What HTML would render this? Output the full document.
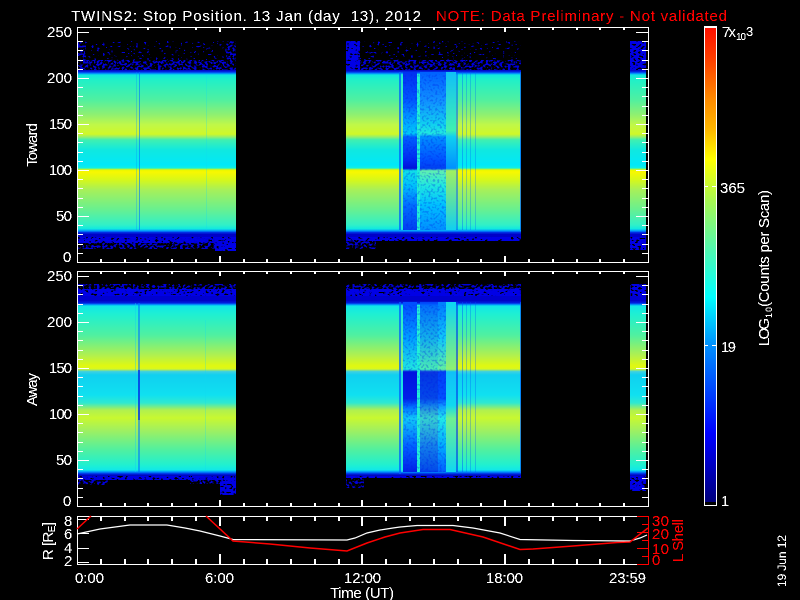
<!DOCTYPE html>
<html><head><meta charset="utf-8"><title>TWINS2 Stop Position</title>
<style>
html,body{margin:0;padding:0;background:#000;width:800px;height:600px;overflow:hidden}
svg{display:block}
text{font-family:"Liberation Sans",sans-serif;fill:#fff;font-size:15px}
.r{fill:#f00}
</style></head><body>
<svg width="800" height="600" viewBox="0 0 800 600" xmlns="http://www.w3.org/2000/svg">
<defs>
<linearGradient id="g1" gradientUnits="userSpaceOnUse" x1="0" x2="0" y1="70" y2="236">
<stop offset="0" stop-color="#0000c0"/><stop offset=".012" stop-color="#0030e8"/><stop offset=".021" stop-color="#0090ff"/><stop offset=".03" stop-color="#10e8e0"/><stop offset=".06" stop-color="#20f0c8"/><stop offset=".18" stop-color="#50f0a0"/><stop offset=".27" stop-color="#90f070"/><stop offset=".33" stop-color="#c0f848"/><stop offset=".386" stop-color="#d0f828"/><stop offset=".404" stop-color="#90f070"/><stop offset=".42" stop-color="#40f0b0"/><stop offset=".482" stop-color="#10e8e0"/><stop offset=".572" stop-color="#00e8f8"/><stop offset=".59" stop-color="#10f0e0"/><stop offset=".602" stop-color="#e8f800"/><stop offset=".614" stop-color="#f8f800"/><stop offset=".66" stop-color="#d8f818"/><stop offset=".72" stop-color="#a8f058"/><stop offset=".84" stop-color="#68f090"/><stop offset=".934" stop-color="#30f0c8"/><stop offset=".957" stop-color="#10e8e0"/><stop offset=".97" stop-color="#0090ff"/><stop offset=".98" stop-color="#0020e0"/><stop offset="1" stop-color="#0000b0"/>
</linearGradient>
<linearGradient id="g2" gradientUnits="userSpaceOnUse" x1="0" x2="0" y1="300" y2="476">
<stop offset="0" stop-color="#0000c0"/><stop offset=".017" stop-color="#0020e0"/><stop offset=".026" stop-color="#0090ff"/><stop offset=".034" stop-color="#10e8e8"/><stop offset=".085" stop-color="#20f0d0"/><stop offset=".2" stop-color="#50f0a0"/><stop offset=".313" stop-color="#b0f050"/><stop offset=".375" stop-color="#e0f810"/><stop offset=".392" stop-color="#d8f820"/><stop offset=".406" stop-color="#40d0e0"/><stop offset=".426" stop-color="#10d0f0"/><stop offset=".54" stop-color="#10e0f0"/><stop offset=".585" stop-color="#30e8d0"/><stop offset=".625" stop-color="#b0f050"/><stop offset=".67" stop-color="#c8f830"/><stop offset=".74" stop-color="#a0f060"/><stop offset=".852" stop-color="#50f0a0"/><stop offset=".937" stop-color="#20f0d0"/><stop offset=".966" stop-color="#10e8e8"/><stop offset=".977" stop-color="#0090ff"/><stop offset=".989" stop-color="#0020e0"/><stop offset="1" stop-color="#0000b0"/>
</linearGradient>
<!-- panel 1 disturbance columns: y = 72 + offset*158 -->
<linearGradient id="a1" gradientUnits="userSpaceOnUse" x1="0" x2="0" y1="72" y2="230">
<stop offset="0" stop-color="#0030f0"/><stop offset=".18" stop-color="#0058ff"/><stop offset=".3" stop-color="#00a0ff"/><stop offset=".39" stop-color="#00c8f8"/><stop offset=".41" stop-color="#0060ff"/><stop offset=".56" stop-color="#0028f0"/><stop offset=".61" stop-color="#0010d8"/><stop offset=".625" stop-color="#10e0e8"/><stop offset=".72" stop-color="#00c0fa"/><stop offset=".84" stop-color="#0070ff"/><stop offset="1" stop-color="#0040f0"/>
</linearGradient>
<linearGradient id="b1" gradientUnits="userSpaceOnUse" x1="0" x2="0" y1="72" y2="230">
<stop offset="0" stop-color="#0060ff"/><stop offset=".18" stop-color="#1090ff"/><stop offset=".33" stop-color="#10d0f0"/><stop offset=".39" stop-color="#20e8e0"/><stop offset=".41" stop-color="#0090ff"/><stop offset=".56" stop-color="#0050ff"/><stop offset=".61" stop-color="#0040f0"/><stop offset=".625" stop-color="#60f0b0"/><stop offset=".72" stop-color="#20e8e0"/><stop offset=".84" stop-color="#00c0ff"/><stop offset="1" stop-color="#0090ff"/>
</linearGradient>
<linearGradient id="c1" gradientUnits="userSpaceOnUse" x1="0" x2="0" y1="72" y2="230">
<stop offset="0" stop-color="#10c0f8"/><stop offset=".37" stop-color="#40f0b0"/><stop offset=".41" stop-color="#10d0f0"/><stop offset=".61" stop-color="#0090ff"/><stop offset=".625" stop-color="#a0f060"/><stop offset="1" stop-color="#10d0f0"/>
</linearGradient>
<!-- panel 2: y = 305 + offset*167 -->
<linearGradient id="a2" gradientUnits="userSpaceOnUse" x1="0" x2="0" y1="305" y2="472">
<stop offset="0" stop-color="#0050ff"/><stop offset=".2" stop-color="#00a0ff"/><stop offset=".385" stop-color="#20e8e0"/><stop offset=".4" stop-color="#0010e0"/><stop offset=".56" stop-color="#0020e8"/><stop offset=".61" stop-color="#0070ff"/><stop offset=".68" stop-color="#10c8f8"/><stop offset=".85" stop-color="#0060ff"/><stop offset="1" stop-color="#0020e8"/>
</linearGradient>
<linearGradient id="b2" gradientUnits="userSpaceOnUse" x1="0" x2="0" y1="305" y2="472">
<stop offset="0" stop-color="#0080ff"/><stop offset=".2" stop-color="#10c8f8"/><stop offset=".385" stop-color="#60f0a0"/><stop offset=".4" stop-color="#0040f8"/><stop offset=".56" stop-color="#0050ff"/><stop offset=".61" stop-color="#10a0ff"/><stop offset=".68" stop-color="#20e8e8"/><stop offset=".85" stop-color="#00a8ff"/><stop offset="1" stop-color="#0060ff"/>
</linearGradient>
<linearGradient id="c2" gradientUnits="userSpaceOnUse" x1="0" x2="0" y1="305" y2="472">
<stop offset="0" stop-color="#10d8f0"/><stop offset=".385" stop-color="#90f070"/><stop offset=".4" stop-color="#10c0f8"/><stop offset=".6" stop-color="#10d8f0"/><stop offset=".68" stop-color="#70f090"/><stop offset="1" stop-color="#10d8f0"/>
</linearGradient>
<linearGradient id="cb" gradientUnits="userSpaceOnUse" x1="0" x2="0" y1="28" y2="502">
<stop offset="0" stop-color="#ff1000"/><stop offset=".0675" stop-color="#ff4000"/><stop offset=".152" stop-color="#ff8c00"/><stop offset=".215" stop-color="#ffb800"/><stop offset=".278" stop-color="#ffff00"/><stop offset=".363" stop-color="#a8f850"/><stop offset=".468" stop-color="#50f8b0"/><stop offset=".568" stop-color="#00ffff"/><stop offset=".669" stop-color="#0090ff"/><stop offset=".855" stop-color="#0000ff"/><stop offset="1" stop-color="#00007c"/>
</linearGradient>
<filter id="aa" x="-5%" y="-20%" width="110%" height="140%" color-interpolation-filters="sRGB">
<feComponentTransfer><feFuncA type="discrete" tableValues="0 0 1 1 1"/></feComponentTransfer>
</filter>
<filter id="sp" x="0" y="0" width="1" height="1" color-interpolation-filters="sRGB">
<feTurbulence type="fractalNoise" baseFrequency=".36 .5" numOctaves="1" seed="4"/>
<feColorMatrix type="matrix" values="0 0 0 0 0  0 0 0 0 0  0 0 0 0 .85  30 0 0 0 -19.5"/>
</filter>
<filter id="sm" x="0" y="0" width="1" height="1" color-interpolation-filters="sRGB">
<feTurbulence type="fractalNoise" baseFrequency=".36 .5" numOctaves="1" seed="9"/>
<feColorMatrix type="matrix" values="0 0 0 0 0  0 0 0 0 0  0 0 0 0 .85  30 0 0 0 -15.5"/>
</filter>
<filter id="sd" x="0" y="0" width="1" height="1" color-interpolation-filters="sRGB">
<feTurbulence type="fractalNoise" baseFrequency=".36 .5" numOctaves="1" seed="15"/>
<feColorMatrix type="matrix" values="0 0 0 0 0  0 0 0 0 0  0 0 0 0 .9  30 0 0 0 -11.5"/>
</filter>
<filter id="gr" x="0" y="0" width="1" height="1" color-interpolation-filters="sRGB">
<feTurbulence type="fractalNoise" baseFrequency=".45" numOctaves="1" seed="21"/>
<feColorMatrix type="matrix" values="0 0 0 0 0  0 0 0 0 .1  0 0 0 0 .9  6 0 0 0 -3"/>
</filter>
<g id="yt" fill="none" stroke="#fff" stroke-width="1" shape-rendering="crispEdges">
<path d="M77 32.5h12M77 78.5h12M77 124.5h12M77 170.5h12M77 216.5h12M648 32.5h-12M648 78.5h-12M648 124.5h-12M648 170.5h-12M648 216.5h-12"/>
<path d="M77 253.5h6M77 244.5h6M77 234.5h6M77 225.5h6M77 207.5h6M77 198.5h6M77 188.5h6M77 179.5h6M77 161.5h6M77 152.5h6M77 142.5h6M77 133.5h6M77 115.5h6M77 106.5h6M77 96.5h6M77 87.5h6M77 69.5h6M77 60.5h6M77 50.5h6M77 41.5h6"/>
<path d="M648 253.5h-6M648 244.5h-6M648 234.5h-6M648 225.5h-6M648 207.5h-6M648 198.5h-6M648 188.5h-6M648 179.5h-6M648 161.5h-6M648 152.5h-6M648 142.5h-6M648 133.5h-6M648 115.5h-6M648 106.5h-6M648 96.5h-6M648 87.5h-6M648 69.5h-6M648 60.5h-6M648 50.5h-6M648 41.5h-6"/>
<path stroke-width="2" d="M220 262v-6M362 262v-6M505 262v-6M220 27v5M362 27v5M505 27v5"/>
<path stroke-width="2" d="M101 262v-3M125 262v-3M148 262v-3M172 262v-3M196 262v-3M244 262v-3M267 262v-3M291 262v-3M315 262v-3M339 262v-3M386 262v-3M410 262v-3M434 262v-3M458 262v-3M481 262v-3M529 262v-3M553 262v-3M577 262v-3M600 262v-3M624 262v-3"/>
<path stroke-width="2" d="M101 27v3M125 27v3M148 27v3M172 27v3M196 27v3M244 27v3M267 27v3M291 27v3M315 27v3M339 27v3M386 27v3M410 27v3M434 27v3M458 27v3M481 27v3M529 27v3M553 27v3M577 27v3M600 27v3M624 27v3"/>
<rect x="77.500" y="27.500" width="571" height="235"/>
</g>
</defs>
<rect width="800" height="600" fill="#000"/>

<!-- Panel 1 data -->
<g shape-rendering="crispEdges">
<rect x="78" y="41" width="158" height="24" filter="url(#sp)"/>
<rect x="78" y="60" width="158" height="11" filter="url(#sm)"/>
<rect x="78" y="41" width="8" height="30" filter="url(#sm)"/>
<rect x="226" y="41" width="10" height="30" filter="url(#sm)"/>
<rect x="346" y="41" width="175" height="24" filter="url(#sp)"/>
<rect x="346" y="60" width="175" height="11" filter="url(#sm)"/>
<rect x="346" y="41" width="14" height="30" filter="url(#sd)"/>
<rect x="630" y="41" width="16" height="30" filter="url(#sd)"/>
<rect x="78" y="235" width="158" height="8" filter="url(#sd)"/>
<rect x="78" y="238" width="158" height="11" filter="url(#sm)"/>
<rect x="215" y="238" width="21" height="13" filter="url(#sd)"/>
<rect x="346" y="235" width="175" height="6" filter="url(#sd)"/>
<rect x="346" y="238" width="30" height="11" filter="url(#sm)"/>
<rect x="630" y="234" width="16" height="16" filter="url(#sd)"/>
<rect x="78" y="70" width="158" height="166" fill="url(#g1)"/>
<rect x="346" y="70" width="175" height="166" fill="url(#g1)"/>
<rect x="630" y="70" width="16" height="166" fill="url(#g1)"/>
<rect x="78" y="234" width="158" height="3" fill="#0000c8"/>
<rect x="346" y="234" width="175" height="3" fill="#0000c8"/>
<rect x="630" y="234" width="16" height="3" fill="#0000c8"/>
<rect x="136" y="72" width="1" height="158" fill="#0090ff" opacity=".3"/>
<rect x="139" y="72" width="1" height="158" fill="#0070ff" opacity=".6"/>
<rect x="206" y="75" width="1" height="155" fill="#10d8f0" opacity=".25"/>
<!-- block 2 disturbance -->
<rect x="399" y="72" width="2" height="158" fill="#0060ff" opacity=".75"/>
<rect x="401" y="74" width="2" height="156" fill="#30f0d0" opacity=".45"/>
<rect x="403" y="72" width="14" height="158" fill="url(#a1)"/>
<rect x="417" y="74" width="3" height="156" fill="#20f0d8"/>
<rect x="420" y="72" width="26" height="158" fill="url(#b1)"/>
<rect x="446" y="72" width="10" height="158" fill="url(#c1)"/>
<rect x="456" y="72" width="2" height="158" fill="#0060ff" opacity=".55"/>
<rect x="462" y="72" width="1" height="158" fill="#0060ff" opacity=".4"/>
<rect x="466" y="72" width="1" height="158" fill="#0060ff" opacity=".3"/>
<rect x="470" y="72" width="1" height="158" fill="#0060ff" opacity=".3"/>
<rect x="475" y="72" width="1" height="158" fill="#0060ff" opacity=".3"/>
<rect x="520" y="72" width="1" height="158" fill="#0060ff" opacity=".7"/>
<rect x="403" y="74" width="43" height="156" filter="url(#gr)" opacity=".3"/>
</g>

<!-- Panel 2 data -->
<g shape-rendering="crispEdges">
<rect x="78" y="284" width="158" height="12" filter="url(#sm)"/>
<rect x="78" y="289" width="158" height="12" filter="url(#sd)"/>
<rect x="346" y="284" width="175" height="12" filter="url(#sm)"/>
<rect x="346" y="289" width="175" height="12" filter="url(#sd)"/>
<rect x="630" y="284" width="16" height="17" filter="url(#sd)"/>
<rect x="78" y="296" width="158" height="8" fill="#0000d0"/>
<rect x="346" y="296" width="175" height="8" fill="#0000d0"/>
<rect x="630" y="296" width="16" height="8" fill="#0000d0"/>
<rect x="78" y="475" width="158" height="5" filter="url(#sd)"/>
<rect x="78" y="476" width="30" height="9" filter="url(#sm)"/>
<rect x="190" y="476" width="46" height="8" filter="url(#sm)"/>
<rect x="220" y="478" width="16" height="17" filter="url(#sd)"/>
<rect x="346" y="475" width="175" height="3" filter="url(#sd)"/>
<rect x="346" y="476" width="18" height="12" filter="url(#sm)"/>
<rect x="630" y="475" width="16" height="16" filter="url(#sd)"/>
<rect x="78" y="300" width="158" height="176" fill="url(#g2)"/>
<rect x="346" y="300" width="175" height="176" fill="url(#g2)"/>
<rect x="630" y="300" width="16" height="176" fill="url(#g2)"/>
<rect x="135" y="303" width="1" height="169" fill="#10d0f0" opacity=".4"/>
<rect x="138" y="303" width="2" height="169" fill="#0070ff" opacity=".55"/>
<rect x="138" y="370" width="2" height="50" fill="#0020e0" opacity=".6"/>
<rect x="205" y="320" width="1" height="150" fill="#10d8f0" opacity=".25"/>
<rect x="399" y="302" width="2" height="172" fill="#0060ff" opacity=".75"/>
<rect x="401" y="305" width="2" height="167" fill="#30f0d0" opacity=".45"/>
<rect x="403" y="302" width="14" height="170" fill="url(#a2)"/>
<rect x="417" y="305" width="3" height="167" fill="#20f0d8"/>
<rect x="420" y="302" width="18" height="170" fill="url(#a2)" opacity=".8"/>
<rect x="438" y="302" width="8" height="170" fill="url(#b2)"/>
<rect x="446" y="302" width="10" height="170" fill="url(#c2)"/>
<rect x="456" y="302" width="2" height="170" fill="#0040f0" opacity=".65"/>
<rect x="462" y="302" width="1" height="170" fill="#0050ff" opacity=".45"/>
<rect x="466" y="302" width="1" height="170" fill="#0050ff" opacity=".3"/>
<rect x="470" y="302" width="1" height="170" fill="#0050ff" opacity=".3"/>
<rect x="475" y="302" width="1" height="170" fill="#0050ff" opacity=".3"/>
<rect x="520" y="302" width="1" height="170" fill="#0060ff" opacity=".7"/>
<rect x="403" y="305" width="43" height="167" filter="url(#gr)" opacity=".3"/>
</g>

<use href="#yt"/>
<use href="#yt" y="244"/>

<!-- Panel 3 -->
<g fill="none" stroke="#fff" stroke-width="1" shape-rendering="crispEdges">
<path d="M77.500 516.500H648M77.500 564.500H648M77.500 516v49"/>
<path d="M77 562.500h12M77 548.500h12M77 533.500h12M77 519.500h12"/>
<path stroke-width="2" d="M220 516v10M362 516v10M505 516v10M220 564v-10M362 564v-10M505 564v-10"/>
<path stroke-width="2" d="M101 516v5M125 516v5M148 516v5M172 516v5M196 516v5M244 516v5M267 516v5M291 516v5M315 516v5M339 516v5M386 516v5M410 516v5M434 516v5M458 516v5M481 516v5M529 516v5M553 516v5M577 516v5M600 516v5M624 516v5"/>
<path stroke-width="2" d="M101 564v-5M125 564v-5M148 564v-5M172 564v-5M196 564v-5M244 564v-5M267 564v-5M291 564v-5M315 564v-5M339 564v-5M386 564v-5M410 564v-5M434 564v-5M458 564v-5M481 564v-5M529 564v-5M553 564v-5M577 564v-5M600 564v-5M624 564v-5"/>
</g>
<polyline fill="none" stroke="#fff" stroke-width="1.200" points="77,534 100,529 115,527 130,525 167,525 185,528 200,531 220,536 233,539.500 347,540 355,538 367,533 380,530 393,528 400,527 417,525.500 453,525.500 473,528 500,533 520,539.500 573,540.500 630,541 640,538 647,535"/>
<polyline fill="none" stroke="#f00" stroke-width="1.500" points="77,529 91,516"/>
<polyline fill="none" stroke="#f00" stroke-width="1.500" points="206,516 233,541 270,544 310,548 335,550 347,551 367,543 385,537 400,533 423,529.500 450,529.500 483,537 520,549.500 533,549 573,546 617,542.500 630,542 648,528"/>
<g fill="none" stroke="#f00" stroke-width="1" shape-rendering="crispEdges">
<path d="M648.500 516v49M637 516.500h12M637 532.500h12M637 548.500h12M637 564.500h12M642 524.500h7M642 540.500h7M642 556.500h7"/>
</g>

<!-- Colorbar -->
<g shape-rendering="crispEdges">
<rect x="705" y="28" width="11" height="474" fill="url(#cb)"/>
<path d="M704.500 27v479M716.500 27v479M704 27.500h13M704 505.500h13" fill="none" stroke="#fff" stroke-width="1"/>
<path d="M704 26.500h13" stroke="#fff" fill="none"/>
<path d="M705 186.500h3M712 186.500h4M705 345.500h3M712 345.500h4" stroke="#fff" fill="none"/>
</g>

<!-- Text -->
<g filter="url(#aa)">
<text x="71" y="21" textLength="350" lengthAdjust="spacing" xml:space="preserve" style="white-space:pre">TWINS2: Stop Position. 13 Jan (day  13), 2012</text>
<text class="r" x="436" y="21" textLength="291" lengthAdjust="spacing" xml:space="preserve">NOTE: Data Preliminary - Not validated</text>
<text x="47" y="37" textLength="25">250</text>
<text x="47" y="83" textLength="25">200</text>
<text x="49" y="129" textLength="23">150</text>
<text x="49" y="175" textLength="23">100</text>
<text x="56" y="221" textLength="16">50</text>
<text x="63" y="262">0</text>
<text x="47" y="281" textLength="25">250</text>
<text x="47" y="327" textLength="25">200</text>
<text x="49" y="373" textLength="23">150</text>
<text x="49" y="419" textLength="23">100</text>
<text x="56" y="465" textLength="16">50</text>
<text x="63" y="506">0</text>
<text x="64" y="526">8</text>
<text x="64" y="539">6</text>
<text x="64" y="553">4</text>
<text x="64" y="566">2</text>
<text x="75" y="583" textLength="29">0:00</text>
<text x="205" y="583" textLength="29">6:00</text>
<text x="344" y="583" textLength="37">12:00</text>
<text x="486" y="583" textLength="37">18:00</text>
<text x="609" y="583" textLength="37">23:59</text>
<text x="330" y="598" textLength="64" xml:space="preserve">Time (UT)</text>
<text class="r" x="652" y="526" textLength="17">30</text>
<text class="r" x="652" y="539" textLength="17">20</text>
<text class="r" x="652" y="554" textLength="17">10</text>
<text class="r" x="652" y="565">0</text>
<text transform="translate(37 167) rotate(-90)" textLength="44">Toward</text>
<text transform="translate(37 406) rotate(-90)" textLength="33">Away</text>
<text transform="translate(53 560) rotate(-90)" textLength="38">R [R<tspan font-size="10" dy="2">E</tspan><tspan dy="-2">]</tspan></text>
<text class="r" transform="translate(683 562) rotate(-90)" textLength="43">L Shell</text>
<text x="722" y="37" textLength="14">7x</text>
<text x="736" y="40" style="font-size:10px" textLength="10">10</text>
<text x="746" y="36" style="font-size:13px">3</text>
<text x="720" y="193" textLength="25">365</text>
<text x="721" y="352" textLength="15">19</text>
<text x="721" y="506">1</text>
<text transform="translate(769 346) rotate(-90)" textLength="28">LOG</text>
<text transform="translate(772 318) rotate(-90)" style="font-size:9px" textLength="11">10</text>
<text transform="translate(769 307) rotate(-90)" textLength="117" xml:space="preserve">(Counts per Scan)</text>
<text transform="translate(786 587) rotate(-90)" style="font-size:12px" textLength="52" xml:space="preserve">19 Jun 12</text>
</g>
</svg>
</body></html>
